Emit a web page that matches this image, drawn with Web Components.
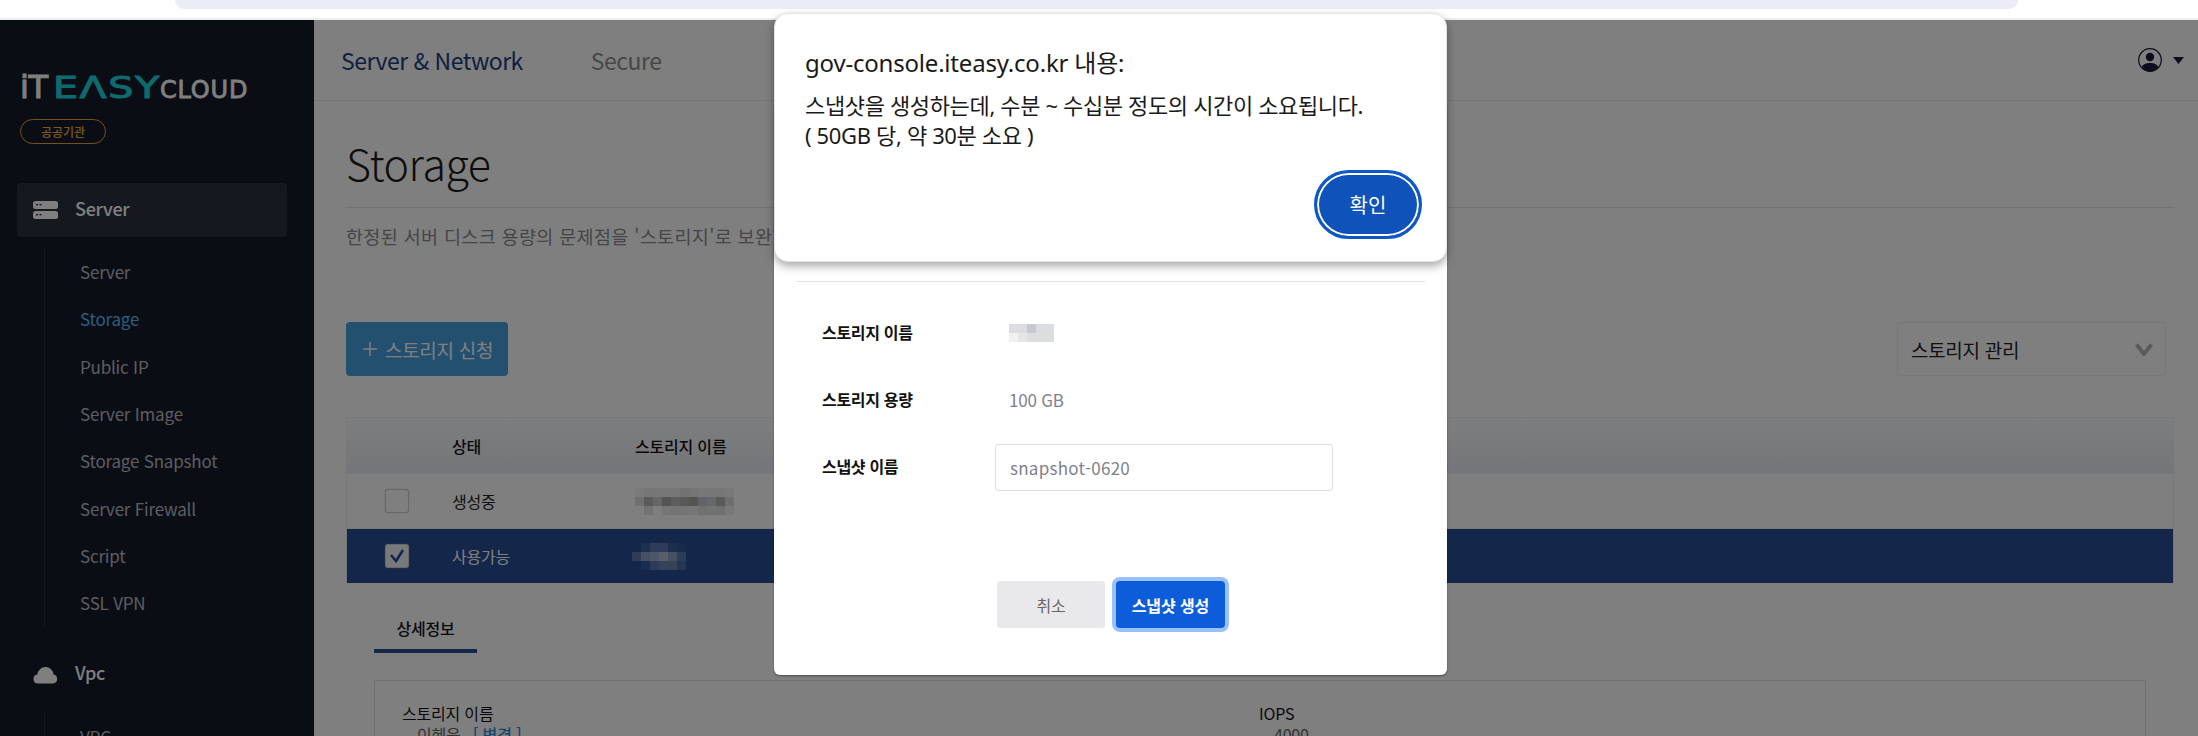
<!DOCTYPE html>
<html lang="ko">
<head>
<meta charset="utf-8">
<title>Storage</title>
<style>
  html, body { margin: 0; padding: 0; height: 736px; overflow: hidden; background: #fff; }
  body { font-family: "Noto Sans CJK KR", "Noto Sans", sans-serif; }
</style>
</head>
<body>
<console-app></console-app>

<script>
// small helper, every element just clones its markup into an open shadow root
function register(tag, html) {
  const template = document.createElement('template')
  template.innerHTML = html
  customElements.define(tag, class extends HTMLElement {
    constructor() {
      super()
      this.attachShadow({ mode: 'open' }).appendChild(template.content.cloneNode(true))
    }
  })
}

// pixelated name, cells = rows of hex colours split by |
class MosaicBlur extends HTMLElement {
  constructor() {
    super()
    this.attachShadow({ mode: 'open' }).innerHTML = `
      <style>
        :host { display: block; line-height: 0; }
        svg { display: block; shape-rendering: crispEdges; }
      </style>
      <svg width="0" height="0"></svg>`
  }

  connectedCallback() {
    const rows = this.getAttribute('cells').split('|')
    const size = +this.getAttribute('size') || 9
    const svg = this.shadowRoot.querySelector('svg')
    svg.setAttribute('width', rows[0].split(' ').length * size)
    svg.setAttribute('height', rows.length * size)
    let out = ''
    rows.forEach((row, y) => row.split(' ').forEach((c, x) => {
      out += `<rect x="${x * size}" y="${y * size}" width="${size}" height="${size}" fill="#${c}"/>`
    }))
    svg.innerHTML = out
  }
}
customElements.define('mosaic-blur', MosaicBlur)

register('browser-strip', `
  <style>
    :host { display: block; height: 18px; background: #fff; border-bottom: 2px solid #eee; }
    .pill { height: 9px; margin: 0 180px 0 175px; background: #e9edf7; border-radius: 0 0 18px 18px; }
  </style>
  <div class="pill"></div>
`)

register('brand-logo', `
  <style>
    :host { display: block; padding: 52px 0 0 20px; }
    .word { display: flex; align-items: baseline; height: 30px; line-height: 30px; font-family: "DejaVu Sans", sans-serif; white-space: nowrap; }
    .it { font-size: 32px; color: #fff; width: 33px; letter-spacing: -.5px; -webkit-text-stroke: 1px #fff; }
    .easy { display: inline-block; width: 107px; font-size: 30px; color: #1cd4de; letter-spacing: 1.2px; transform: scaleX(1.32); transform-origin: left; -webkit-text-stroke: 1px #1cd4de; }
    .cloud { font-size: 24px; color: #fff; letter-spacing: .8px; -webkit-text-stroke: .8px #fff; }
    .badge { display: flex; align-items: center; justify-content: center; box-sizing: border-box; width: 86px; height: 25px; margin-top: 17px; border: 1px solid #e0a63a; border-radius: 13px; color: #f4b23c; font-size: 12px; font-weight: 500; }
  </style>
  <div class="word"><span class="it">iT</span><span class="easy">EΛSY</span><span class="cloud">CLOUD</span></div>
  <div class="badge">공공기관</div>
`)

register('nav-group', `
  <style>
    :host { display: block; }
    .head { display: flex; align-items: center; height: 54px; margin: 0 27px 0 17px; padding-left: 16px; gap: 17px; border-radius: 4px; font-size: 18px; font-weight: 500; color: #fff; letter-spacing: -.3px; }
    :host([active]) .head { background: #2b303f; }
    ::slotted(span) { padding-bottom: 5px; }
    .list { margin: 11px 0 0 44px; border-left: 1px solid #2d3240; padding-left: 35px; }
  </style>
  <div class="head"><slot name="icon"></slot><slot name="title"></slot></div>
  <div class="list"><slot></slot></div>
`)

register('nav-link', `
  <style>
    :host { display: flex; align-items: center; height: 47.33px; font-size: 17px; color: #b9bcc2; letter-spacing: -.2px; white-space: nowrap; }
    :host([current]) { color: #58bdf8; }
  </style>
  <slot></slot>
`)

register('side-nav', `
  <style>
    :host { display: block; width: 314px; flex: none; height: 716px; overflow: hidden; background: #141a28; }
    .groups { margin-top: 39px; }
    .vpc { display: block; margin-top: 21px; }
    svg { display: block; width: 25px; height: 20px; fill: #fff; }
  </style>
  <brand-logo></brand-logo>
  <div class="groups">
    <nav-group active>
      <svg slot="icon" viewBox="0 0 25 20"><rect y="1" width="25" height="8" rx="2.5"/><rect y="11" width="25" height="8" rx="2.5"/><rect x="3" y="4" width="2" height="1.4" fill="#2b303f"/><rect x="6.5" y="4" width="2" height="1.4" fill="#2b303f"/><rect x="3" y="14" width="2" height="1.4" fill="#2b303f"/><rect x="6.5" y="14" width="2" height="1.4" fill="#2b303f"/></svg>
      <span slot="title">Server</span>
      <nav-link>Server</nav-link>
      <nav-link current>Storage</nav-link>
      <nav-link>Public IP</nav-link>
      <nav-link>Server Image</nav-link>
      <nav-link>Storage Snapshot</nav-link>
      <nav-link>Server Firewall</nav-link>
      <nav-link>Script</nav-link>
      <nav-link>SSL VPN</nav-link>
    </nav-group>
    <nav-group class="vpc">
      <svg slot="icon" viewBox="0 0 25 20"><path d="M5 18.5a4.5 4.5 0 0 1-.6-8.96A8 8 0 0 1 12.5 2a8 8 0 0 1 8 7.6A4.5 4.5 0 0 1 20 18.5z"/></svg>
      <span slot="title">Vpc</span>
      <nav-link>VPC</nav-link>
    </nav-group>
  </div>
`)

register('top-bar', `
  <style>
    :host { display: flex; align-items: center; box-sizing: border-box; height: 81px; padding: 0 14px 0 27px; border-bottom: 1px solid #eceef2; background: #fff; }
    .tab { font-size: 23px; letter-spacing: -.5px; color: #8f8f8f; margin-right: 68px; }
    .tab.on { color: #1d3f7f; }
    .user { margin-left: auto; display: flex; align-items: center; gap: 11px; }
  </style>
  <span class="tab on">Server &amp; Network</span>
  <span class="tab">Secure</span>
  <div class="user">
    <svg width="24" height="24" viewBox="0 0 24 24">
      <circle cx="12" cy="12" r="11.3" fill="none" stroke="#1a1a3a" stroke-width="1.2"/>
      <circle cx="12" cy="9" r="4.2" fill="#1a1a3a"/>
      <path d="M3.6 19.5C5 16 8 15 12 15s7 1 8.4 4.5A11.6 11.6 0 0 1 12 23.6 11.6 11.6 0 0 1 3.6 19.5z" fill="#1a1a3a"/>
    </svg>
    <svg width="11" height="7" viewBox="0 0 11 7"><path d="M0 0h11L5.5 7z" fill="#1a1a3a"/></svg>
  </div>
`)

register('table-row', `
  <style>
    :host { display: grid; grid-template-columns: 105px 183px 1fr; align-items: center; box-sizing: border-box; height: 55px; font-size: 16px; color: #222; border-bottom: 1px solid #eef0f3; background: #fff; letter-spacing: -.2px; }
    :host([head]) { height: 56px; background: linear-gradient(#fbfcff, #e9ecf2); font-weight: 500; color: #111; }
    :host([selected]) { height: 54px; background: #284e94; color: #fff; border-bottom: 0; }
    .check { justify-self: start; margin-left: 38px; }
  </style>
  <div class="check"><slot name="check"></slot></div>
  <div><slot name="state"></slot></div>
  <div><slot name="name"></slot></div>
`)

register('check-box', `
  <style>
    :host { display: block; box-sizing: border-box; width: 24px; height: 24px; border: 1px solid #ced0d3; border-radius: 3px; background: #fff; box-shadow: 0 0 1px #aaa; }
    :host([checked]) { background: #f1f3f6; }
    svg { display: none; }
    :host([checked]) svg { display: block; }
  </style>
  <svg width="22" height="22" viewBox="0 0 22 22"><path d="M5 10l5 6 7-11" fill="none" stroke="#284e94" stroke-width="2.6"/></svg>
`)

register('detail-box', `
  <style>
    :host { display: block; padding: 0 28px; }
    .tabs { display: flex; height: 66px; }
    .tab { box-sizing: border-box; width: 103px; height: 70px; padding-top: 33px; text-align: center; border-bottom: 4px solid #284e94; font-size: 16px; font-weight: 500; color: #111; letter-spacing: -.2px; }
    .box { margin-top: 31px; border: 1px solid #dfe1e5; height: 120px; box-sizing: border-box; padding: 22px 27px; display: grid; grid-template-columns: 857px 1fr; line-height: 21px; font-size: 16px; color: #111; letter-spacing: -.2px; }
    .val { padding-left: 15px; color: #666; }
    .val a { color: #2f8fd8; font-weight: 500; margin-left: 8px; }
  </style>
  <div class="tabs"><div class="tab">상세정보</div></div>
  <div class="box">
    <div><div>스토리지 이름</div><div class="val">이혜윤 <a>[ 변경 ]</a></div></div>
    <div><div>IOPS</div><div class="val">4000</div></div>
  </div>
`)

register('storage-page', `
  <style>
    :host { display: block; padding: 0 24px 0 32px; background: #fff; }
    h1 { margin: 0; height: 107px; box-sizing: border-box; padding-top: 31px; border-bottom: 1px solid #e6e8ec; font-size: 43px; font-weight: 300; line-height: 60px; color: #1a1a1a; letter-spacing: -.5px; }
    .lead { margin: 16px 0 0; height: 24px; line-height: 24px; font-size: 18.5px; color: #8a8c90; letter-spacing: .35px; white-space: nowrap; }
    .tools { display: flex; justify-content: space-between; margin-top: 74px; padding-right: 8px; }
    .add { display: flex; align-items: center; box-sizing: border-box; width: 162px; height: 54px; padding-left: 16px; gap: 7px; border-radius: 4px; background: #46a0de; color: #fff; font-size: 19px; letter-spacing: -.3px; }
    .pick { display: flex; align-items: center; justify-content: space-between; box-sizing: border-box; width: 269px; height: 54px; padding: 0 12px 0 13px; border: 1px solid #eef0f2; border-radius: 4px; font-size: 19px; letter-spacing: -.3px; color: #222; }
    .table { margin-top: 41px; border: 1px solid #eef0f3; border-bottom: 0; }
    .shift { margin-left: -3px; }
  </style>
  <h1>Storage</h1>
  <p class="lead">한정된 서버 디스크 용량의 문제점을 '스토리지'로 보완할 수 있습니다.</p>
  <div class="tools">
    <div class="add">
      <svg width="16" height="16" viewBox="0 0 16 16"><path d="M8 1v14M1 8h14" stroke="#fff" stroke-width="1.4"/></svg>
      <span>스토리지 신청</span>
    </div>
    <div class="pick">
      <span>스토리지 관리</span>
      <svg width="18" height="13" viewBox="0 0 18 13"><path d="M1.5 1.5L9 11l7.5-9.5" fill="none" stroke="#b4b4b4" stroke-width="4"/></svg>
    </div>
  </div>
  <div class="table">
    <table-row head><span slot="state">상태</span><span slot="name">스토리지 이름</span></table-row>
    <table-row>
      <check-box slot="check"></check-box>
      <span slot="state">생성중</span>
      <mosaic-blur slot="name" cells="f4f4f4 ececec eeeeee f0f0f0 eeeeee e4e4e4 eaeaea f0f0f0 eeeeee eeeeee f2f2f2|e0e0e0 b4b4b4 cccccc a8a8a8 bcbcbc b0b0b0 aca8a4 c4c6d0 ced0d2 b4b4b4 dcdcdc|fcfcfc e4e4e4 fcfcfc ececec e8e8e8 eaeaea ececec e0e0e0 e4e4e4 e0e0e0 f2f2f2"></mosaic-blur>
    </table-row>
    <table-row selected>
      <check-box slot="check" checked></check-box>
      <span slot="state">사용가능</span>
      <mosaic-blur class="shift" slot="name" cells="284e94 3a5e9e 5a78b0 5a78b0 3a5e9e 2e5498|5c78ac 8ca0c4 9aaccc b0bed6 8ca0c4 5c78ac|284e94 345aa0 5a78b0 6a86b4 6a86b4 4a6aa6"></mosaic-blur>
    </table-row>
  </div>
  <detail-box></detail-box>
`)

register('snapshot-modal', `
  <style>
    :host { position: absolute; left: 774px; top: 100px; width: 673px; height: 575px; box-sizing: border-box; padding: 0 22px; background: #fff; border-radius: 6px; color: #111; box-shadow: 0 1px 2px rgba(0,0,0,.4); }
    hr { margin: 181px 0 0; border: 0; border-top: 1px solid #e4e4e6; }
    .form { display: grid; grid-template-columns: 173px 1fr; margin-top: 17px; padding-left: 26px; align-items: center; }
    .form > * { height: 67px; display: flex; align-items: center; }
    .label { font-size: 16px; font-weight: 700; letter-spacing: -.3px; padding-bottom: 2px; box-sizing: border-box; }
    .val { padding-left: 14px; font-size: 17px; color: #7d828c; letter-spacing: -.2px; }
    .input { box-sizing: border-box; width: 338px; height: 47px; margin-top: 2px; padding-left: 14px; border: 1px solid #dedfe2; border-radius: 3px; font-size: 17px; color: #7d828c; letter-spacing: .25px; }
    .actions { display: flex; gap: 11px; margin: 81px 0 0 201px; }
    button { width: 108px; height: 47px; padding: 0; border: 0; border-radius: 3px; font: inherit; font-size: 16px; letter-spacing: -.1px; }
    .cancel { background: #e9e9eb; color: #666; }
    .ok { width: 109px; background: #0d5ddb; color: #fff; font-weight: 700; box-shadow: 0 0 0 4px #99c0ff; border-radius: 4px; }
  </style>
  <hr>
  <div class="form">
    <div class="label">스토리지 이름</div>
    <div class="val"><mosaic-blur cells="dcdde0 dcdde0 c8c9cd dcdde0 dcdde0|f1f1f2 e6e6e8 dcdde0 dcdde0 dcdde0"></mosaic-blur></div>
    <div class="label">스토리지 용량</div>
    <div class="val">100 GB</div>
    <div class="label">스냅샷 이름</div>
    <div class="input">snapshot-0620</div>
  </div>
  <div class="actions">
    <button class="cancel">취소</button>
    <button class="ok">스냅샷 생성</button>
  </div>
`)

register('alert-dialog', `
  <style>
    :host { position: absolute; left: 774px; top: 13px; width: 673px; height: 249px; box-sizing: border-box; padding: 34px 30px 0; background: #fff; border: 1px solid #e4e4e4; border-radius: 14px; box-shadow: 0 4px 10px rgba(0,0,0,.35); color: #1a1a1a; font-family: "Noto Sans", "Noto Sans CJK KR", sans-serif; }
    .title { font-size: 24px; line-height: 30px; letter-spacing: -.2px; }
    .body { margin-top: 12px; font-size: 22px; line-height: 30px; letter-spacing: -.35px; white-space: nowrap; }
    .row { display: flex; justify-content: flex-end; margin: 20px -6px 0 0; }
    .btn { display: flex; align-items: center; justify-content: center; box-sizing: border-box; width: 108px; height: 69px; border-radius: 35px; background: #0e52ba; border: 3px solid #0d57c9; box-shadow: inset 0 0 0 2px #fff; color: #fff; font-size: 20px; font-family: "Noto Sans CJK KR", sans-serif; }
  </style>
  <div class="title">gov-console.iteasy.co.kr 내용:</div>
  <div class="body">스냅샷을 생성하는데, 수분 ~ 수십분 정도의 시간이 소요됩니다.<br>( 50GB 당, 약 30분 소요 )</div>
  <div class="row"><div class="btn">확인</div></div>
`)

register('console-app', `
  <style>
    :host { display: block; position: relative; width: 2198px; height: 736px; overflow: hidden; }
    .app { display: flex; height: 716px; overflow: hidden; }
    main { flex: 1; min-width: 0; background: #fff; }
    .backdrop { position: absolute; left: 0; right: 0; top: 20px; bottom: 0; background: rgba(0,0,0,.5); }
  </style>
  <browser-strip></browser-strip>
  <div class="app">
    <side-nav></side-nav>
    <main>
      <top-bar></top-bar>
      <storage-page></storage-page>
    </main>
  </div>
  <div class="backdrop"></div>
  <snapshot-modal></snapshot-modal>
  <alert-dialog></alert-dialog>
`)
</script>
</body>
</html>
